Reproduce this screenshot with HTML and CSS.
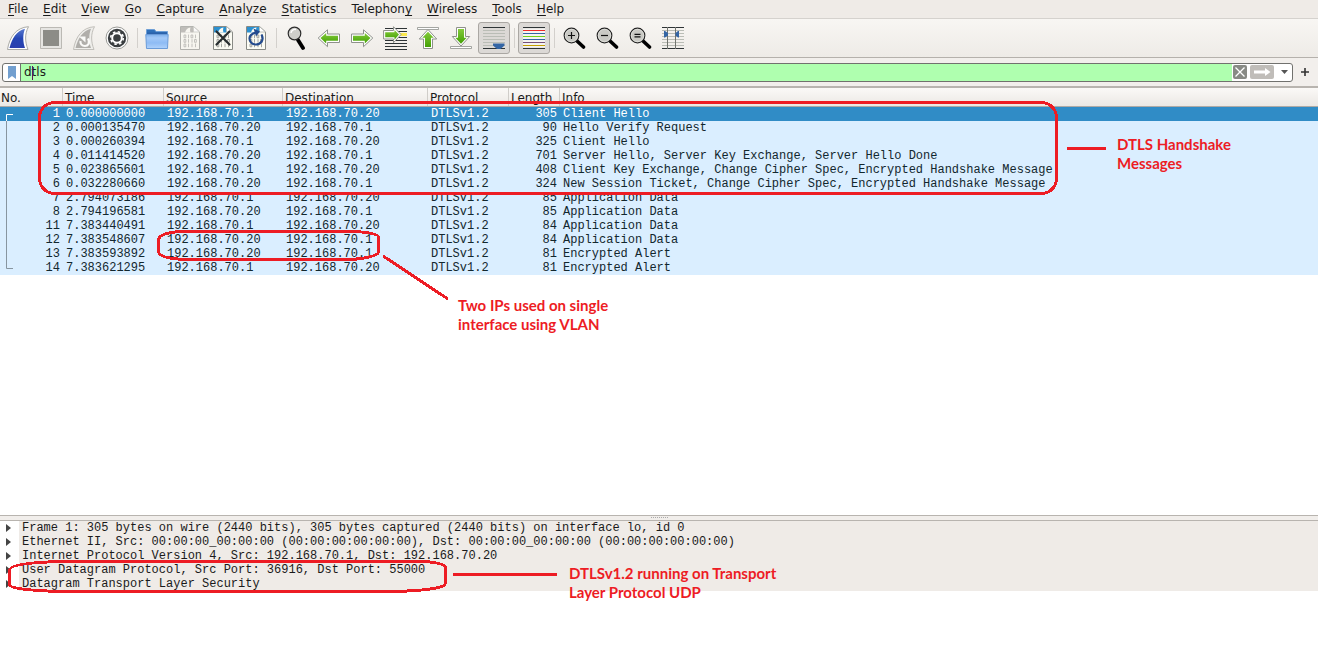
FILE: index.html
```html
<!DOCTYPE html>
<html lang="en">
<head>
<meta charset="utf-8">
<title>Packet capture</title>
<link rel="stylesheet" href="styles.css">
</head>
<body>
<svg class="defs" width="0" height="0" aria-hidden="true">
  <defs>
    <linearGradient id="blue" x1="0" y1="0" x2="0" y2="1"><stop offset="0" stop-color="#5b7bd0"/><stop offset=".5" stop-color="#2546b4"/><stop offset="1" stop-color="#2a3fae"/></linearGradient>
    <linearGradient id="green" x1="0" y1="0" x2="0" y2="1"><stop offset="0" stop-color="#84cb3a"/><stop offset="1" stop-color="#43a005"/></linearGradient>
    <linearGradient id="folder" x1="0" y1="0" x2="0" y2="1"><stop offset="0" stop-color="#7fb0ec"/><stop offset=".25" stop-color="#a3c9f8"/><stop offset=".6" stop-color="#8ebbf4"/><stop offset="1" stop-color="#b0d2fb"/></linearGradient>
    <symbol id="page" viewBox="0 0 24 24">
      <path d="M2.500.5h13l6 5.500v17.500h-19z" fill="#fbfbf3" stroke="#888a85"/>
      <path d="M3 1h12.500v5.500H3z" fill="currentColor"/>
      <path d="M7 6.500C8 3.500 9.500 2 12.500 1.500C11.800 3.500 12 5 12.500 6.500z" fill="#fbfbf3"/>
      <path d="M15.500.5v5.500h6z" fill="#fff" stroke="#a5a8a2" stroke-width=".7"/>
      <g fill="none" stroke="#8f918c" stroke-width=".8">
        <path d="M6 9h1.800v2.800H6zM13 9h1.800v2.800H13zM6 13.500h1.800v2.800H6zM16.500 13.500h1.800v2.800h-1.800zM6 18h1.800v2.800H6z"/>
        <path d="M10.500 8.600v3.600M17.500 8.600v3.600M10.500 13.100v3.600M14 13.100v3.600M10.500 17.600v3.600M14 17.600v3.600M17.500 17.600v3.600"/>
      </g>
    </symbol>
    <symbol id="lens" viewBox="0 0 24 24">
      <path d="M14.500 14.500l7 6.500" stroke="#000" stroke-width="3.600" stroke-linecap="round"/>
      <circle cx="9.500" cy="9.500" r="7.300" fill="#c9c9c4" stroke="#222" stroke-width="1.200"/>
      <circle cx="9.500" cy="9.500" r="6.300" fill="none" stroke="#e6e6e2" stroke-width=".7"/>
    </symbol>
  </defs>
</svg>

<nav class="menubar" aria-label="Main menu">
  <button><u>F</u>ile</button><button><u>E</u>dit</button><button><u>V</u>iew</button><button><u>G</u>o</button><button><u>C</u>apture</button><button><u>A</u>nalyze</button><button><u>S</u>tatistics</button><button>Telephon<u>y</u></button><button><u>W</u>ireless</button><button><u>T</u>ools</button><button><u>H</u>elp</button>
</nav>

<div class="toolbar" role="toolbar" aria-label="Main toolbar">
  <button class="tool" aria-label="Start capture"><svg viewBox="0 0 24 24"><path d="M1.500 23.500C3.500 11 10 1.500 22.500.7C18.500 8 19 16 22 23.500z" fill="#fff" stroke="#aaaaa6"/><path d="M3.500 22C6 12 10.500 5 19 2.700C16.500 9 17 16 19 22z" fill="url(#blue)"/></svg></button>
  <button class="tool" aria-label="Stop capture"><svg viewBox="0 0 24 24"><path d="M1.500 1.500h21v21h-21z" fill="#e6e5e2" stroke="#bbb9b4"/><path d="M4 4h16v16H4z" fill="#8c8c87"/></svg></button>
  <button class="tool" aria-label="Restart capture"><svg viewBox="0 0 24 24"><path d="M1.500 23.500C3.500 11 10 1.500 22.500.7C18.500 8 19 16 22 23.500z" fill="#efeeeb" stroke="#c1bfba"/><path d="M3.500 22C6 12 10.500 5 19 2.700C16.500 9 17 16 19 22z" fill="#b0aeaa"/><path d="M16 12.500C18.500 17 16 20 13 20s-5-2-4.500-5" fill="none" stroke="#fafaf8" stroke-width="2.200"/><path d="M7 10.500h6.500v6z" fill="#fafaf8"/></svg></button>
  <button class="tool" aria-label="Capture options"><svg viewBox="0 0 24 24"><circle cx="12" cy="12" r="11" fill="#fff" stroke="#999a96"/><circle cx="12" cy="12" r="9.200" fill="#3a3e40"/><circle cx="12" cy="12" r="4.800" fill="none" stroke="#fff" stroke-width="2"/><circle cx="12" cy="12" r="6.300" fill="none" stroke="#fff" stroke-width="1.600" stroke-dasharray="2.474 2.474"/></svg></button>
  <span class="sep"></span>
  <button class="tool" aria-label="Open file"><svg viewBox="0 0 24 24"><path d="M1.500 3.500h8l1.500 2h11.500v4h-21z" fill="#2f6fb8" stroke="#6f9fd6"/><path d="M2 6.500h20v2H2z" fill="#2b62ab"/><path d="M.8 8.500h22.400l-.7 14h-21z" fill="url(#folder)" stroke="#6a9bd8"/></svg></button>
  <button class="tool faded" aria-label="Save file"><svg viewBox="0 0 24 24"><use href="#page"/></svg></button>
  <button class="tool file" aria-label="Close file"><svg viewBox="0 0 24 24"><use href="#page"/><path d="M5.500 5.500l13 13M18.500 5.500l-13 13" stroke="#272d2f" stroke-width="2.200" stroke-linecap="round"/></svg></button>
  <button class="tool file" aria-label="Reload file"><svg viewBox="0 0 24 24"><use href="#page"/><path d="M17.500 8.500C20.500 14 16.500 18.500 12 18.500S5.500 15.500 5.500 12.300S8 7.500 12 6.500" fill="none" stroke="#244b8e" stroke-width="2.200"/><path d="M9.500 2.500L16 5.500l-4 5z" fill="#244b8e"/></svg></button>
  <span class="sep"></span>
  <button class="tool" aria-label="Find packet"><svg viewBox="0 0 24 24"><path d="M14 14l5 8" stroke="#000" stroke-width="3.800" stroke-linecap="round"/><circle cx="10.500" cy="7.500" r="6.300" fill="#cfcfcb" stroke="#2d2d2d" stroke-width="1.200"/><path d="M7 7a4 4 0 0 1 5-3.500" fill="none" stroke="#fff" stroke-width="1.400"/></svg></button>
  <button class="tool" aria-label="Previous packet"><svg viewBox="0 0 24 24"><path d="M1.200 12L10.500 3.800V8H22.500v8.500H10.500v4.200z" fill="#fff" stroke="#8e918b"/><path d="M3.500 12.100L9.200 7v2.700H21v5H9.200v2.800z" fill="url(#green)"/></svg></button>
  <button class="tool" aria-label="Next packet"><svg viewBox="0 0 24 24"><path d="M22.800 12L13.500 3.800V8H1.500v8.500h12v4.200z" fill="#fff" stroke="#8e918b"/><path d="M20.500 12.100L14.800 7v2.700H3v5h11.800v2.800z" fill="url(#green)"/></svg></button>
  <button class="tool" aria-label="Go to packet"><svg viewBox="0 0 24 24"><path d="M2 2.500h22M2 5.500h22M2 11.500h22M2 14.500h22M2 17.500h22M2 20.500h22M2 23.500h22" stroke="#2e3436" stroke-width="1"/><path d="M14 7h10v3H14z" fill="#fce94f"/><path d="M18 8.500L10.500.7V4.500H.6v8.500h9.900v3.700z" fill="#fff" stroke="#8e918b"/><path d="M16 8.600L11.500 4v2.200H2.200v5h9.300v2.500z" fill="url(#green)"/></svg></button>
  <button class="tool" aria-label="First packet"><svg viewBox="0 0 24 24"><path d="M1.500 1.500h21v2h-21z" fill="#fff" stroke="#8e918b" stroke-width=".8"/><path d="M12 3.500L20.700 13H16.500v9.500h-9V13H3.300z" fill="#fff" stroke="#8e918b"/><path d="M12 5.800L17.700 11.700H15V21H9v-9.300H6.300z" fill="url(#green)"/></svg></button>
  <button class="tool" aria-label="Last packet"><svg viewBox="0 0 24 24"><path d="M1.500 20.500h21v2h-21z" fill="#fff" stroke="#8e918b" stroke-width=".8"/><path d="M12 20L20.700 10.500H16.500V1.500h-9v9H3.300z" fill="#fff" stroke="#8e918b"/><path d="M12 17.700L17.700 11.800H15V3H9v8.800H6.300z" fill="url(#green)"/></svg></button>
  <button class="tool pressed" aria-label="Auto scroll" aria-pressed="true"><svg viewBox="0 0 24 24"><path d="M1 4.500h22M1 7.500h22M1 10.500h22M1 13.500h22M1 16.500h22M1 19.500h22" stroke="#babdb6"/><path d="M1 1.500h22M1 22.500h22" stroke="#2e3436"/><path d="M11 17.500h11.500v2l-4 3.500h-3.500l-4-3.500z" fill="#3465a4"/></svg></button>
  <span class="sep"></span>
  <button class="tool pressed" aria-label="Colorize packets" aria-pressed="true"><svg viewBox="0 0 24 24"><path d="M1 2.500h22v19H1z" fill="#f4f3f1"/><path d="M1 1.500h22M1 22.500h22" stroke="#2e3436"/><path d="M1 4.500h22" stroke="#ef2929"/><path d="M1 7.500h22" stroke="#3465a4"/><path d="M1 10.500h22" stroke="#73d216"/><path d="M1 13.500h22" stroke="#3465a4"/><path d="M1 16.500h22" stroke="#75507b"/><path d="M1 19.500h22" stroke="#c4a000"/></svg></button>
  <span class="sep"></span>
  <button class="tool" aria-label="Zoom in"><svg viewBox="0 0 24 24"><use href="#lens"/><path d="M9.500 6v7M6 9.500h7" stroke="#111" stroke-width="1.200"/></svg></button>
  <button class="tool" aria-label="Zoom out"><svg viewBox="0 0 24 24"><use href="#lens"/><path d="M6 9.500h7" stroke="#111" stroke-width="1.200"/></svg></button>
  <button class="tool" aria-label="Normal size"><svg viewBox="0 0 24 24"><use href="#lens"/><path d="M6.500 8.300h6M6.500 10.800h6" stroke="#111" stroke-width="1.200"/></svg></button>
  <button class="tool" aria-label="Resize columns"><svg viewBox="0 0 24 24"><path d="M1 4.500h22M1 7.500h22M1 10.500h22M1 13.500h22M1 16.500h22M1 19.500h22" stroke="#babdb6"/><path d="M1 1.500h22M1 22.500h22" stroke="#2e3436"/><path d="M6.500 1v22M14.500 1v22" stroke="#72756f"/><path d="M3 5h1l3 2v2.500l-3 2H3zM18 5h-1l-2.500 2v2.500l2.500 2h1z" fill="#3465a4"/></svg></button>
</div>

<form class="filterbar">
  <div class="filterbox">
    <button type="button" class="bookmark" aria-label="Filter bookmarks"><svg width="8" height="13" viewBox="0 0 8 13"><path d="M0 0h8v13l-4-3-4 3z" fill="#729fcf"/></svg></button>
    <label class="entry" aria-label="Display filter"><input type="text" value="dtls"><span class="cursor"></span></label>
    <button type="button" class="clear" aria-label="Clear"><svg width="14" height="14" viewBox="0 0 14 14"><path d="M2.500 2.500l9 9M11.500 2.500l-9 9" stroke="#fff" stroke-width="1.300"/></svg></button>
    <button type="button" class="apply" aria-label="Apply"><svg width="24" height="14" viewBox="0 0 24 14"><path d="M4 5.500h11V3l5.500 4L15 11V8.500H4z" fill="#fff"/></svg></button>
    <button type="button" class="recent" aria-label="Recent filters"><svg width="7" height="4" viewBox="0 0 7 4"><path d="M0 0h7L3.500 4z" fill="#555"/></svg></button>
  </div>
  <button type="button" class="add" aria-label="Add filter button"><svg width="8" height="8" viewBox="0 0 8 8"><path d="M4 0v8M0 4h8" stroke="#333" stroke-width="1.600"/></svg></button>
</form>

<main class="panes">
  <section class="packets">
    <table>
      <colgroup><col class="c-no"><col class="c-time"><col class="c-src"><col class="c-dst"><col class="c-proto"><col class="c-len"><col></colgroup>
      <thead><tr><th>No.</th><th>Time</th><th>Source</th><th>Destination</th><th>Protocol</th><th>Length</th><th>Info</th></tr></thead>
      <tbody>
        <tr class="selected"><td>1</td><td>0.000000000</td><td>192.168.70.1</td><td>192.168.70.20</td><td>DTLSv1.2</td><td>305</td><td>Client Hello</td></tr>
        <tr><td>2</td><td>0.000135470</td><td>192.168.70.20</td><td>192.168.70.1</td><td>DTLSv1.2</td><td>90</td><td>Hello Verify Request</td></tr>
        <tr><td>3</td><td>0.000260394</td><td>192.168.70.1</td><td>192.168.70.20</td><td>DTLSv1.2</td><td>325</td><td>Client Hello</td></tr>
        <tr><td>4</td><td>0.011414520</td><td>192.168.70.20</td><td>192.168.70.1</td><td>DTLSv1.2</td><td>701</td><td>Server Hello, Server Key Exchange, Server Hello Done</td></tr>
        <tr><td>5</td><td>0.023865601</td><td>192.168.70.1</td><td>192.168.70.20</td><td>DTLSv1.2</td><td>408</td><td>Client Key Exchange, Change Cipher Spec, Encrypted Handshake Message</td></tr>
        <tr><td>6</td><td>0.032280660</td><td>192.168.70.20</td><td>192.168.70.1</td><td>DTLSv1.2</td><td>324</td><td>New Session Ticket, Change Cipher Spec, Encrypted Handshake Message</td></tr>
        <tr><td>7</td><td>2.794073186</td><td>192.168.70.1</td><td>192.168.70.20</td><td>DTLSv1.2</td><td>85</td><td>Application Data</td></tr>
        <tr><td>8</td><td>2.794196581</td><td>192.168.70.20</td><td>192.168.70.1</td><td>DTLSv1.2</td><td>85</td><td>Application Data</td></tr>
        <tr><td>11</td><td>7.383440491</td><td>192.168.70.1</td><td>192.168.70.20</td><td>DTLSv1.2</td><td>84</td><td>Application Data</td></tr>
        <tr><td>12</td><td>7.383548607</td><td>192.168.70.20</td><td>192.168.70.1</td><td>DTLSv1.2</td><td>84</td><td>Application Data</td></tr>
        <tr><td>13</td><td>7.383593892</td><td>192.168.70.20</td><td>192.168.70.1</td><td>DTLSv1.2</td><td>81</td><td>Encrypted Alert</td></tr>
        <tr><td>14</td><td>7.383621295</td><td>192.168.70.1</td><td>192.168.70.20</td><td>DTLSv1.2</td><td>81</td><td>Encrypted Alert</td></tr>
      </tbody>
    </table>
  </section>
  <div class="splitter"><span class="grip"></span></div>
  <section class="details">
    <ul>
      <li><button aria-label="Expand"></button><span>Frame 1: 305 bytes on wire (2440 bits), 305 bytes captured (2440 bits) on interface lo, id 0</span></li>
      <li><button aria-label="Expand"></button><span>Ethernet II, Src: 00:00:00_00:00:00 (00:00:00:00:00:00), Dst: 00:00:00_00:00:00 (00:00:00:00:00:00)</span></li>
      <li><button aria-label="Expand"></button><span>Internet Protocol Version 4, Src: 192.168.70.1, Dst: 192.168.70.20</span></li>
      <li><button aria-label="Expand"></button><span>User Datagram Protocol, Src Port: 36916, Dst Port: 55000</span></li>
      <li><button aria-label="Expand"></button><span>Datagram Transport Layer Security</span></li>
    </ul>
  </section>
</main>

<svg class="marks" width="1318" height="645" viewBox="0 0 1318 645" aria-hidden="true">
  <path d="M6.500 121v147.500H13" fill="none" stroke="#8795a0"/>
  <path d="M13 114.500H6.500V121" fill="none" stroke="#fff"/>
  <g fill="none" stroke="#ed1c24" stroke-width="3" shape-rendering="crispEdges">
    <rect x="39.500" y="102.500" width="1017" height="91" rx="15"/>
    <path d="M1067 148.500h39"/>
    <path d="M180 231.500h175Q378 233 378.500 237v15Q378 257 352 259.500H184Q159 258 158.500 252v-12Q159 233 180 231.500z"/>
    <path d="M383 256l65 43"/>
    <path d="M60 561.500h365Q445 563 445.500 568v15Q446 590 395 591.500H60Q10 590 9.500 585v-15Q10 563 60 561.500z"/>
    <path d="M453 574.500h104"/>
  </g>
</svg>
<p class="note note-handshake">DTLS Handshake<br>Messages</p>
<p class="note note-vlan">Two IPs used on single<br>interface using VLAN</p>
<p class="note note-udp">DTLSv1.2 running on Transport<br>Layer Protocol UDP</p>
</body>
</html>
```
FILE: styles.css
```css
* { box-sizing: border-box; }

body {
  position: relative;
  display: flex;
  flex-direction: column;
  min-height: 100vh;
  margin: 0;
  background: #fff;
  color: #1a1a1a;
  font: 12px/14px "DejaVu Sans", sans-serif;
}

button {
  margin: 0;
  padding: 0;
  border: 0;
  background: none;
  color: inherit;
  font: inherit;
}

svg { display: block; }
.defs { position: absolute; }

.menubar {
  display: flex;
  gap: 15px;
  height: 19px;
  padding: 0 8px;
  border-bottom: 1px solid #d5d2ce;
  background: #efebe7;
}

.menubar u { text-underline-offset: 2px; }

.toolbar {
  display: flex;
  align-items: center;
  gap: 1px;
  height: 39px;
  padding: 0 2px;
  border-bottom: 1px solid #b5b1ac;
  background: linear-gradient(#f8f6f3, #eeebe7);
}

.tool {
  display: grid;
  place-items: center;
  width: 32px;
  height: 32px;
}

.tool svg { width: 24px; height: 24px; }
.file { color: #2d91d0; }
.faded { color: #9c9a96; opacity: .6; }

.pressed {
  border: 1px solid #aaa7a3;
  border-radius: 3px;
  background: #dcd9d6;
}

.sep {
  width: 6px;
  height: 20px;
  background: linear-gradient(#d3d0cc, #d3d0cc) center / 1px 100% no-repeat;
}

.filterbar {
  display: flex;
  align-items: center;
  gap: 8px;
  height: 30px;
  padding: 0 9px 0 2px;
  border-bottom: 2px solid #b8b4af;
  background: #f2efec;
}

.filterbox {
  display: flex;
  flex: 1;
  align-items: center;
  height: 19px;
  border: 1px solid #71716e;
  border-radius: 3px;
  background: #fff;
}

.bookmark {
  display: grid;
  place-items: center;
  width: 18px;
  height: 17px;
  border-right: 1px solid #71716e;
}

.entry { position: relative; flex: 1; }

.entry input {
  display: block;
  width: 100%;
  height: 17px;
  padding: 0 3px;
  border: 0;
  outline: 0;
  background: #afffaf;
  color: #1a1a1a;
  font: inherit;
}

.cursor {
  position: absolute;
  top: 2px;
  left: 11px;
  width: 1px;
  height: 14px;
  background: #5a1a5a;
}

.clear { margin-left: 1px; border-radius: 2px; background: #888a85; }
.apply { margin-left: 3px; border-radius: 2px; background: #c0bdb9; }
.recent { margin: 0 4px 0 7px; }

.panes {
  display: grid;
  flex: 1;
  grid-template-rows: 3.44fr 6px 1fr;
}

table {
  width: 100%;
  border-collapse: collapse;
  table-layout: fixed;
}

.c-no { width: 62px; }
.c-time { width: 101px; }
.c-src { width: 119px; }
.c-dst { width: 145px; }
.c-proto { width: 81px; }
.c-len { width: 51px; }

thead tr { background: linear-gradient(#fbf9f7, #ebe8e4); }

th {
  height: 18px;
  padding: 2px 0 0 3px;
  border-bottom: 1px solid #aeaaa5;
  box-shadow: inset 1px 0 #d0cdc9;
  font-weight: normal;
  line-height: 14px;
  text-align: left;
}

th:first-child { padding-left: 1px; box-shadow: none; }

td {
  height: 14px;
  padding: 0 0 0 4px;
  font: 12px/14px "Liberation Mono", monospace;
  white-space: nowrap;
}

td:nth-child(1), td:nth-child(6) { padding-right: 2px; text-align: right; }

tbody tr { background: #daeeff; color: #12272e; }
tbody .selected { background: #308cc6; color: #fff; }

.splitter {
  display: grid;
  place-items: center;
  border: solid #b8b4af;
  border-width: 1px 0;
  background: #f1eeeb;
}

.grip { width: 17px; border-top: 1px dotted #aaa; }

.details ul {
  margin: 0;
  padding: 0;
  list-style: none;
  font: 12px/14px "Liberation Mono", monospace;
}

.details li { display: flex; }

.details li button {
  width: 19px;
  padding-left: 6px;
}

.details li button::before {
  display: block;
  width: 0;
  border: solid transparent;
  border-width: 4px 0 4px 5px;
  border-left-color: #444;
  content: "";
}

.details li span {
  flex: 1;
  padding-left: 3px;
  background: #efebe7;
  white-space: nowrap;
}

.marks {
  position: absolute;
  top: 0;
  left: 0;
  pointer-events: none;
}

.note {
  position: absolute;
  margin: 0;
  color: #ed1c24;
  font: bold 15px/19px Lato, sans-serif;
  white-space: nowrap;
}

.note-handshake { top: 135px; left: 1117px; }
.note-vlan { top: 296px; left: 458px; }
.note-udp { top: 564px; left: 569px; }
```
